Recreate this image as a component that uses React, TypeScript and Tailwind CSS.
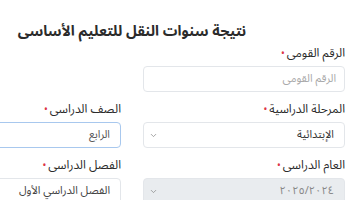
import { ChevronDown } from "lucide-react";

const font = { fontFamily: '"Noto Sans Arabic", "Noto Sans", sans-serif' };

function Label({ text }: { text: string }) {
  return (
    <label className="block h-4 leading-4 mb-1 text-[12px] text-[#2b2b2b]">
      {text}
      <span className="text-[#dc3545] text-[10px] mr-0.5">•</span>
    </label>
  );
}

function Field({ label, children }: { label: string; children: React.ReactNode }) {
  return (
    <div className="mb-[10px]">
      <Label text={label} />
      {children}
    </div>
  );
}

function Select({ value, disabled }: { value: string; disabled?: boolean }) {
  return (
    <div
      className={`h-[26px] rounded border border-[#e3e6ea] flex items-center justify-between pr-[10px] pl-[5px] text-[11px] ${
        disabled ? "bg-[#e9ecef] text-[#888]" : "bg-white text-[#333]"
      }`}
    >
      <span>{value}</span>
      <ChevronDown size={9} strokeWidth={2} className="text-[#888]" />
    </div>
  );
}

export default function App() {
  return (
    <div dir="rtl" className="w-[360px] h-[200px] overflow-hidden bg-white" style={font}>
      <div className="flex pr-[15px] pt-[20px]">
        <div className="w-[426px] shrink-0">
          {/* title centred over both columns */}
          <div className="flex justify-center mb-[2px]">
            <h1 className="text-[14.5px] leading-[24px] font-bold text-[#2b2b2b] whitespace-nowrap">
              نتيجة سنوات النقل للتعليم الأساسى
            </h1>
          </div>
          <div className="grid grid-cols-2 gap-x-[22px]">
            <Field label="الرقم القومى">
              <div className="h-[26px] rounded border border-[#e3e6ea] bg-white flex items-center pr-[8px] text-[11px] text-[#aaa]">
                الرقم القومى
              </div>
            </Field>
            <div />
            <Field label="المرحلة الدراسية">
              <Select value="الإبتدائية" />
            </Field>
            <Field label="الصف الدراسى">
              <div className="h-[26px] rounded border border-[#a8c8ee] bg-white flex items-center pr-[10px] text-[11px] text-[#555]">
                الرابع
              </div>
            </Field>
            <Field label="العام الدراسى">
              <Select value="٢٠٢٥/٢٠٢٤" disabled />
            </Field>
            <Field label="الفصل الدراسى">
              <div className="h-[26px] rounded border border-[#e3e6ea] bg-white flex items-center pr-[10px] text-[11px] text-[#444]">
                الفصل الدراسي الأول
              </div>
            </Field>
          </div>
        </div>
      </div>
    </div>
  );
}
